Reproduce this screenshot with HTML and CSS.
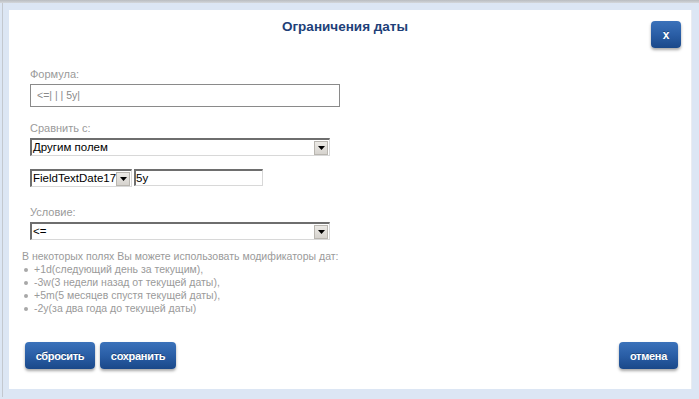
FILE: index.html
```html
<!DOCTYPE html>
<html lang="ru">
<head>
    <meta charset="UTF-8">
    <title>Ограничения даты</title>
    <link rel="stylesheet" href="styles.css">
</head>
<body>
    <div class="top-strip"></div>
    <div class="frame">
        <div class="dialog">
            <div class="dialog-head">
                <span></span>
                <h2 class="title">Ограничения даты</h2>
                <button class="btn btn-close">x</button>
            </div>

            <div class="form">
                <label class="label">Формула:</label>
                <div class="formula">&lt;=| | | 5y|</div>

                <label class="label label-compare">Сравнить с:</label>
                <div class="select select-wide">
                    <span class="select-text">Другим полем</span>
                    <span class="select-arrow"><svg width="7" height="4" viewBox="0 0 7 4"><path d="M0 0h7L3.5 4z" fill="#000"/></svg></span>
                </div>

                <div class="field-row">
                    <div class="select select-field">
                        <span class="select-text">FieldTextDate17</span>
                        <span class="select-arrow"><svg width="7" height="4" viewBox="0 0 7 4"><path d="M0 0h7L3.5 4z" fill="#000"/></svg></span>
                    </div>
                    <div class="text-input">5y</div>
                </div>

                <label class="label label-cond">Условие:</label>
                <div class="select select-wide">
                    <span class="select-text">&lt;=</span>
                    <span class="select-arrow"><svg width="7" height="4" viewBox="0 0 7 4"><path d="M0 0h7L3.5 4z" fill="#000"/></svg></span>
                </div>
            </div>

            <div class="help">
                <p>В некоторых полях Вы можете использовать модификаторы дат:</p>
                <ul>
                    <li>+1d(следующий день за текущим),</li>
                    <li>-3w(3 недели назад от текущей даты),</li>
                    <li>+5m(5 месяцев спустя текущей даты),</li>
                    <li>-2y(за два года до текущей даты)</li>
                </ul>
            </div>

            <div class="actions">
                <button class="btn btn-reset">сбросить</button>
                <button class="btn btn-save">сохранить</button>
                <button class="btn btn-cancel">отмена</button>
            </div>
        </div>
    </div>
</body>
</html>
```

FILE: styles.css
```css
:root {
    --frame: #dce6f4;
    --title: #1e3f78;
    --muted: #9a9a9a;
    --btn-top: #3b72ba;
    --btn-bottom: #1a4889;
}

* {
    margin: 0;
    padding: 0;
    box-sizing: border-box;
}

body {
    font-family: Arial, "Liberation Sans", sans-serif;
    background-color: var(--frame);
    width: 699px;
    height: 399px;
    overflow: hidden;
}

.top-strip {
    height: 3px;
    background: linear-gradient(#b9bcc0, #d4d7db);
}

.frame {
    border-left: 1px solid #c3c8cf;
    margin-left: 2px;
    padding: 7px 6px 0 6px;
    height: 394px;
}

.dialog {
    background: #fff;
    width: 683px;
    height: 379px;
    border-right: 1px solid #e8ecf1;
    display: flex;
    flex-direction: column;
}

.dialog-head {
    display: grid;
    grid-template-columns: 1fr auto 1fr;
    align-items: start;
    padding: 9px 10px 0 0;
}

.title {
    font-size: 13.5px;
    line-height: 16px;
    font-weight: bold;
    color: var(--title);
}

.btn {
    font-family: Arial, "Liberation Sans", sans-serif;
    font-weight: bold;
    font-size: 11px;
    letter-spacing: -0.3px;
    color: #fff;
    border: none;
    border-radius: 4px;
    background: linear-gradient(var(--btn-top), #2a5ea6 50%, var(--btn-bottom));
    box-shadow: 0 2px 3px rgba(0, 0, 0, 0.35);
    text-shadow: 0 -1px 0 rgba(0, 0, 0, 0.3);
    cursor: pointer;
    height: 27px;
}

.btn-close {
    justify-self: end;
    margin-top: 2px;
    width: 30px;
    font-size: 12px;
}

.form {
    padding: 19px 0 0 21px;
    display: flex;
    flex-direction: column;
    align-items: flex-start;
}

.label {
    font-size: 11px;
    line-height: 14px;
    color: var(--muted);
}

.formula {
    margin-top: 3px;
    width: 310px;
    height: 23px;
    border: 1px solid #8a8a8a;
    font-size: 10.5px;
    line-height: 21px;
    padding-left: 6px;
    color: #8a8a8a;
}

.label-compare {
    margin-top: 14px;
}

.select {
    display: flex;
    align-items: center;
    height: 18px;
    border-top: 2px solid #6e6e6e;
    border-left: 2px solid #6e6e6e;
    border-right: 1px solid #d8d8d8;
    border-bottom: 1px solid #d8d8d8;
    background: #fff;
}

.select-wide {
    margin-top: 3px;
    width: 300px;
}

.select-text {
    flex: 1;
    min-width: 0;
    overflow: hidden;
    white-space: nowrap;
    font-size: 11.5px;
    line-height: 15px;
    color: #000;
    padding-left: 1px;
}

.select-arrow {
    flex: none;
    width: 14px;
    height: 14px;
    margin-right: 1px;
    background: linear-gradient(#eceae6, #d6d3ce);
    border: 1px solid #b9b6b0;
    display: flex;
    align-items: center;
    justify-content: center;
}

.field-row {
    display: flex;
    gap: 2px;
    margin-top: 13px;
}

.select-field {
    width: 102px;
}

.text-input {
    width: 129px;
    height: 17px;
    border-top: 2px solid #6e6e6e;
    border-left: 2px solid #6e6e6e;
    border-right: 1px solid #d8d8d8;
    border-bottom: 1px solid #d8d8d8;
    font-size: 11.5px;
    line-height: 14px;
    color: #000;
}

.label-cond {
    margin-top: 18px;
}

.help {
    padding: 10px 0 0 13px;
    font-size: 10.5px;
    line-height: 13px;
    color: var(--muted);
}

.help ul {
    list-style: none;
}

.help li {
    position: relative;
    padding-left: 12px;
}

.help li::before {
    content: "";
    position: absolute;
    left: 2px;
    top: 5px;
    width: 4px;
    height: 4px;
    border-radius: 50%;
    background: #a8a8a8;
}

.actions {
    display: flex;
    gap: 5px;
    padding: 0 13px 0 16px;
    margin-top: 27px;
}

.btn-reset {
    width: 70px;
}

.btn-save {
    width: 76px;
}

.btn-cancel {
    width: 59px;
    margin-left: auto;
}
```
